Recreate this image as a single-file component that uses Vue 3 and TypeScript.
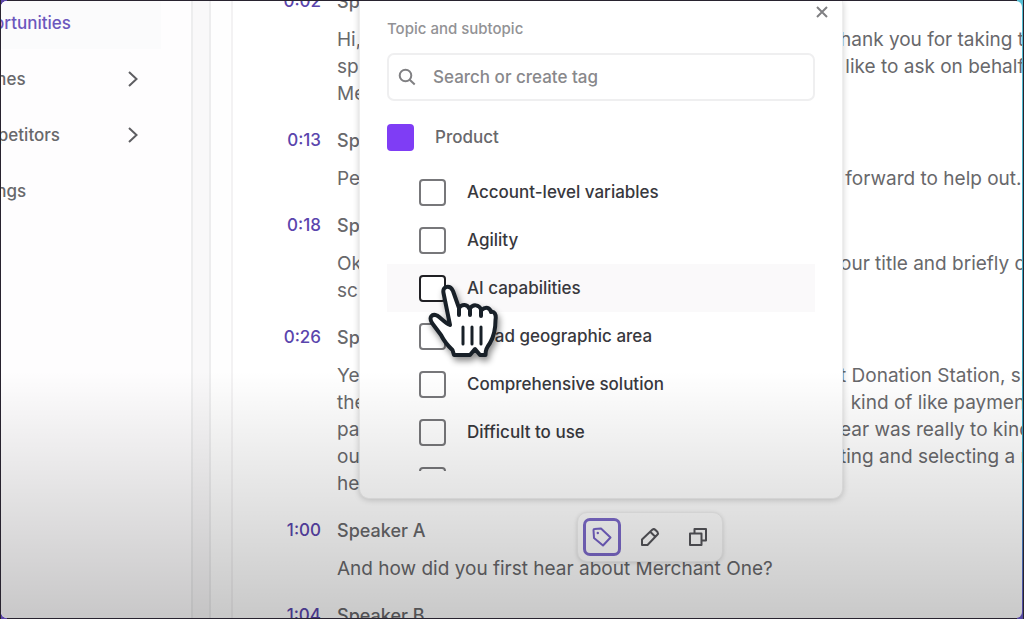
<script setup lang="ts">
import { ref } from 'vue'

interface Line { left: string; right?: string }
interface Entry { time: string; speaker: string; lines: Line[] }

const nav = [
  { label: 'Opportunities', active: true, expandable: false },
  { label: 'Themes', active: false, expandable: true },
  { label: 'Competitors', active: false, expandable: true },
  { label: 'Settings', active: false, expandable: false },
]

const entries: Entry[] = [
  {
    time: '0:02', speaker: 'Speaker A',
    lines: [
      { left: 'Hi,', right: 'hank you for taking the' },
      { left: 'sp', right: ' like to ask on behalf' },
      { left: 'Me' },
    ],
  },
  { time: '0:13', speaker: 'Speaker B', lines: [{ left: 'Pe', right: ' forward to help out.' }] },
  { time: '0:18', speaker: 'Speaker A', lines: [{ left: 'Ok', right: 'our title and briefly de' }, { left: 'sc' }] },
  {
    time: '0:26', speaker: 'Speaker B',
    lines: [
      { left: 'Ye', right: 't Donation Station, sp' },
      { left: 'the', right: '  kind of like payment' },
      { left: 'pa', right: 'ear was really to kind' },
      { left: 'ou', right: 'ting and selecting a m' },
      { left: 'he' },
    ],
  },
  { time: '1:00', speaker: 'Speaker A', lines: [{ left: 'And how did you first hear about Merchant One?' }] },
  { time: '1:04', speaker: 'Speaker B', lines: [] },
]

const tags = [
  'Account-level variables',
  'Agility',
  'AI capabilities',
  'Broad geographic area',
  'Comprehensive solution',
  'Difficult to use',
  '',
]
const hovered = 'AI capabilities'
const selected = ref<string[]>([])
const query = ref('')
</script>

<template>
  <div class="frame">
    <div class="screen">
      <nav class="sidebar">
        <a v-for="item in nav" :key="item.label" href="#" class="nav-item" :class="{ active: item.active }">
          <span>{{ item.label }}</span>
          <svg v-if="item.expandable" class="chevron" viewBox="0 0 12 18"><path d="M2 2l7.500 7L2 16" /></svg>
        </a>
      </nav>
      <div class="gutter"></div>
      <div class="strip"></div>

      <main class="transcript">
        <article v-for="entry in entries" :key="entry.time" class="entry">
          <span class="time">{{ entry.time }}</span>
          <div class="speech">
            <h2 class="speaker">{{ entry.speaker }}</h2>
            <p v-for="line in entry.lines" :key="line.left" class="line" :class="{ split: line.right }">
              <span>{{ line.left }}</span><span v-if="line.right">{{ line.right }}</span>
            </p>
          </div>
        </article>
      </main>

      <div class="toolbar">
        <button type="button" class="tool current" aria-label="Tag">
          <svg viewBox="0 0 22 22"><path d="M2.500 4Q2.500 3 3.500 3L10 2.500 19.500 11.500 12 19.500 3 12Z" /><circle class="dot" cx="6.800" cy="7" r="1.200" /></svg>
        </button>
        <button type="button" class="tool" aria-label="Edit">
          <svg viewBox="0 0 22 22"><path d="M3 19v-5.500L13.500 3.500Q15 2.500 16.500 4L18.500 6Q19.500 7.500 18.500 8.500L8.500 19ZM11.500 6l4.500 4.500" /></svg>
        </button>
        <button type="button" class="tool" aria-label="Copy">
          <svg viewBox="0 0 22 22"><path d="M3 7.500h11.500V19H3ZM7.500 7.500v-4.500H19v11.500h-4.500" /></svg>
        </button>
      </div>

      <section class="popover">
        <button type="button" class="close" aria-label="Close">
          <svg viewBox="0 0 12 12"><path d="M1 1l10 10M11 1L1 11" /></svg>
        </button>
        <label class="caption" for="tag-search">Topic and subtopic</label>
        <div class="search">
          <svg viewBox="0 0 18 18"><circle cx="7.500" cy="7.500" r="5.800" /><path d="M11.700 11.700l5 4.800" /></svg>
          <input id="tag-search" v-model="query" type="text" placeholder="Search or create tag" />
        </div>
        <div class="topic"><span class="swatch"></span>Product</div>
        <div class="options">
          <label v-for="tag in tags" :key="tag" class="option" :class="{ hovered: tag === hovered }">
            <input v-model="selected" type="checkbox" :value="tag" />
            <span>{{ tag }}</span>
          </label>
        </div>
      </section>

      <svg class="cursor" viewBox="0 0 90 98">
        <path class="hand" d="M28.500 23C27 16 35 14.500 38 21L44 38C47 33.500 52.500 34 54.500 39C58 33.500 64 34.500 66.500 40C71 36 75 38 76 42C79 41 81.500 44 80.500 50C80.500 60 78.500 67 75 73C71.500 78 70.500 80 70.500 85H65L60 79 55 85H39L37.500 80C32 75 29 71 26 65L17 53C13.500 47 17 43.500 22 45.500C26 48 30 53 35 55Z" />
        <path class="folds" d="M48 57v17M57 57v17M66 57v17" />
        <path class="knuckles" d="M44 37v8M55 38v7M66 40v6" />
      </svg>
      <div class="shade"></div>
    </div>
  </div>
</template>

<style>
body { margin: 0; }
</style>

<style scoped>
.frame {
  box-sizing: border-box;
  height: 100vh;
  padding: 1px;
  background: linear-gradient(#55bfd4, #2b9ab8 75%, #5546a0) right 1px top 0 / 6px 100% no-repeat,
    linear-gradient(#5b45a8, #5b45a8) left 1px top 0 / 6px 100% no-repeat, #28232f;
  font-family: Inter, "Liberation Sans", sans-serif;
  color: #68686b;
  overflow: hidden;
}
.screen {
  position: relative;
  display: flex;
  height: 100%;
  margin-right: 1px;
  border-radius: 6px;
  background: #fff;
  overflow: hidden;
}
.sidebar {
  flex: none;
  width: 190px;
  box-sizing: border-box;
  padding: 1px 30px 0 0;
  background: #fefdfe;
  display: flex;
  flex-direction: column;
  gap: 4px;
  margin-top: -5px;
}
.nav-item {
  display: flex;
  justify-content: space-between;
  align-items: center;
  height: 52px;
  padding-right: 22px;
  margin-left: -41px;
  color: #68686b;
  font-size: 17px;
  font-weight: 500;
  text-decoration: none;
}
.nav-item.active { color: #6c57bd; background: #fbfbfc; }
.chevron { width: 12px; height: 18px; fill: none; stroke: #5e5e62; stroke-width: 2; }
.gutter { flex: none; width: 16px; border: solid #ededee; border-width: 0 2px; background: #f9f8f9; }
.strip { flex: none; width: 20px; border-right: 2px solid #f3f2f3; background: #fefefe; }
.transcript { flex: 1; min-width: 0; margin-top: -13px; overflow: hidden; }
.entry { display: grid; grid-template-columns: 88px 1fr; column-gap: 16px; padding-bottom: 20px; }
.time { text-align: right; color: #5a45ad; font-size: 17px; font-weight: 500; line-height: 27px; }
.speech { min-width: 0; }
.speaker { margin: 0 0 11px; font-size: 18px; font-weight: 500; line-height: 27px; }
.line { margin: 0; font-size: 19px; line-height: 27px; white-space: pre; }
.line.split { display: grid; grid-template-columns: 503px 1fr; }

.toolbar {
  position: absolute;
  left: 576px;
  top: 511px;
  display: flex;
  gap: 10px;
  padding: 5px;
  border: 1px solid #f0f0f0;
  border-radius: 10px;
  background: #fff;
  box-shadow: 0 1px 4px rgba(0, 0, 0, 0.15);
}
.tool {
  display: grid;
  place-items: center;
  width: 38px;
  height: 38px;
  padding: 0;
  border: 3px solid transparent;
  border-radius: 7px;
  background: none;
  color: #55555a;
}
.tool.current { border-color: #7d6acb; color: #7662c8; }
.tool svg { width: 22px; height: 22px; fill: none; stroke: currentColor; stroke-width: 2; stroke-linejoin: round; }
.tool .dot { fill: currentColor; stroke: none; }

.popover {
  position: absolute;
  left: 358px;
  top: 0;
  box-sizing: border-box;
  width: 484px;
  padding: 17px 27px 27px;
  border: 1px solid #eee;
  border-top: 0;
  border-radius: 0 0 10px 10px;
  background: #fff;
  box-shadow: 0 1px 6px rgba(0, 0, 0, 0.2);
}
.close { position: absolute; right: 13px; top: 4px; width: 14px; height: 14px; padding: 0; border: 0; background: none; display: grid; place-items: center; }
.close svg { width: 12px; height: 12px; stroke: #808083; stroke-width: 2; }
.caption { display: block; font-size: 15px; font-weight: 500; line-height: 22px; color: #929295; }
.search {
  display: flex;
  align-items: center;
  gap: 17px;
  box-sizing: border-box;
  height: 48px;
  margin-top: 13px;
  padding: 0 9px;
  border: 2px solid #efeff0;
  border-radius: 7px;
}
.search svg { flex: none; width: 18px; height: 18px; fill: none; stroke: #808083; stroke-width: 2; }
.search input { flex: 1; min-width: 0; padding: 0; border: 0; outline: 0; background: none; font: 500 17px Inter, sans-serif; color: #636366; }
.search input::placeholder { color: #88888b; opacity: 1; }
.topic { display: flex; align-items: center; gap: 21px; height: 26px; margin-top: 23px; font-size: 17px; font-weight: 500; }
.swatch { width: 27px; height: 27px; border-radius: 4px; background: #7f3df5; }
.options { height: 303px; margin-top: 18px; overflow: hidden; }
.option { display: flex; align-items: center; gap: 21px; height: 48px; padding-left: 32px; font-size: 17px; font-weight: 500; color: #38383d; }
.option.hovered { background: #faf9fa; }
.option input { appearance: none; box-sizing: border-box; width: 27px; height: 27px; margin: 0; border: 2px solid #77777a; border-radius: 4px; background: #fff; }
.option.hovered input { border-color: #202024; }

.cursor { position: absolute; left: 414px; top: 269px; width: 90px; height: 98px; filter: drop-shadow(2px 4px 3px rgba(0, 0, 0, 0.45)); }
.hand { fill: #fff; stroke: #182028; stroke-width: 4; stroke-linejoin: round; }
.folds { fill: none; stroke: #182028; stroke-width: 3; stroke-linecap: round; }
.knuckles { fill: none; stroke: #182028; stroke-width: 4; stroke-linecap: round; }
.shade { position: absolute; inset: 60% 0 0; background: linear-gradient(transparent, rgba(0, 0, 0, 0.21)); pointer-events: none; }
</style>
